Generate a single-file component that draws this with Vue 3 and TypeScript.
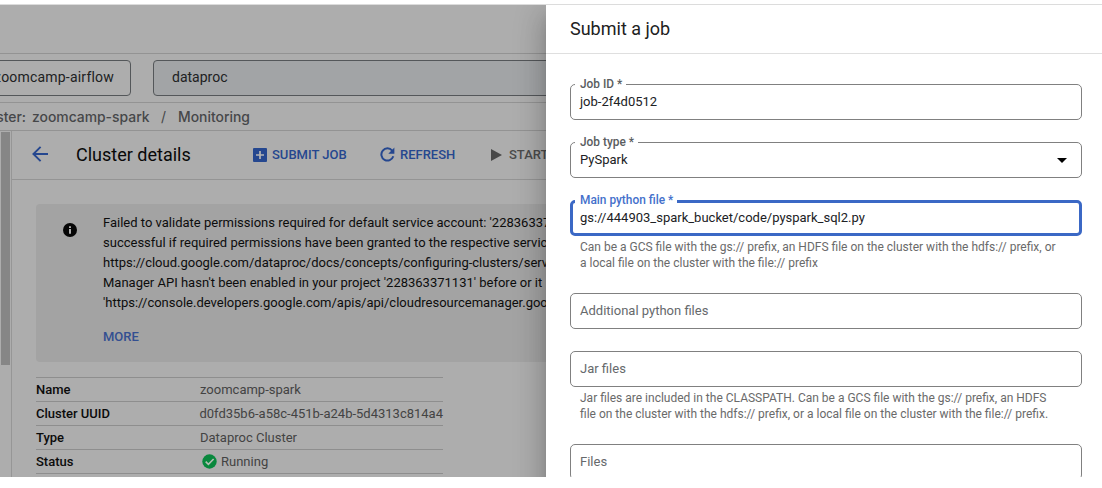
<script setup lang="ts">
interface Field {
  label: string
  value?: string
  hint?: string[]
  focused?: boolean
  select?: boolean
}

const fields: Field[] = [
  { label: 'Job ID *', value: 'job-2f4d0512' },
  { label: 'Job type *', value: 'PySpark', select: true },
  {
    label: 'Main python file *',
    value: 'gs://444903_spark_bucket/code/pyspark_sql2.py',
    focused: true,
    hint: [
      'Can be a GCS file with the gs:// prefix, an HDFS file on the cluster with the hdfs:// prefix, or',
      'a local file on the cluster with the file:// prefix',
    ],
  },
  { label: 'Additional python files' },
  {
    label: 'Jar files',
    hint: [
      'Jar files are included in the CLASSPATH. Can be a GCS file with the gs:// prefix, an HDFS',
      'file on the cluster with the hdfs:// prefix, or a local file on the cluster with the file:// prefix.',
    ],
  },
  { label: 'Files' },
]

const notice: string[] = [
  "Failed to validate permissions required for default service account: '228363371131",
  'successful if required permissions have been granted to the respective service',
  'https://cloud.google.com/dataproc/docs/concepts/configuring-clusters/service',
  "Manager API hasn't been enabled in your project '228363371131' before or it",
  "'https://console.developers.google.com/apis/api/cloudresourcemanager.google",
]

const details: { name: string; value: string; ok?: boolean }[] = [
  { name: 'Name', value: 'zoomcamp-spark' },
  { name: 'Cluster UUID', value: 'd0fd35b6-a58c-451b-a24b-5d4313c814a4' },
  { name: 'Type', value: 'Dataproc Cluster' },
  { name: 'Status', value: 'Running', ok: true },
]
</script>

<template>
  <div class="window">
    <div class="stage">
      <main class="page">
        <div class="banner"></div>
        <div class="searchbar">
          <div class="project"><span>zoomcamp-airflow</span></div>
          <div class="search">dataproc</div>
        </div>
        <nav class="crumbs">
          <span class="crumb-kind">ster:</span>
          <span class="crumb-name">zoomcamp-spark</span>
          <span class="slash">/</span>
          <span class="crumb-last">Monitoring</span>
        </nav>
        <div class="body">
          <div class="rail"><div class="thumb"></div></div>
          <section class="content">
            <header class="toolbar">
              <svg class="back" width="16" height="16" viewBox="0 0 16 16">
                <path d="M8.6 .8 1.4 8l7.2 7.2M1.6 8H16" fill="none" stroke="#25478f" stroke-width="1.9" />
              </svg>
              <h1>Cluster details</h1>
              <span class="action submit">
                <svg width="14" height="14" viewBox="0 0 14 14">
                  <rect width="14" height="14" rx="1" fill="#25478f" />
                  <path d="M7 3v8M3 7h8" stroke="#b4b4b4" stroke-width="1.7" />
                </svg>
                SUBMIT JOB
              </span>
              <span class="action refresh">
                <svg width="15" height="15" viewBox="0 0 15 15">
                  <path d="M12.2 3.6A6.1 6.1 0 1 0 13.3 9.3" fill="none" stroke="#25478f" stroke-width="2" />
                  <path d="M14.4.6v6.1H8.3z" fill="#25478f" />
                </svg>
                REFRESH
              </span>
              <span class="action start">
                <svg width="11" height="12" viewBox="0 0 11 12"><path d="M0 0 11 6 0 12z" fill="#484848" /></svg>
                START
              </span>
            </header>
            <div class="notice">
              <svg width="14" height="14" viewBox="0 0 14 14">
                <circle cx="7" cy="7" r="7" fill="#060606" />
                <path d="M6.1 3.3h1.8v1.6H6.1zM6.1 6.1h1.8v4.7H6.1z" fill="#c0c0c0" />
              </svg>
              <div class="notice-text">
                <p v-for="line in notice" :key="line">{{ line }}</p>
                <a>MORE</a>
              </div>
            </div>
            <dl class="details">
              <div v-for="row in details" :key="row.name" class="detail">
                <dt>{{ row.name }}</dt>
                <dd>
                  <svg v-if="row.ok" width="15" height="15" viewBox="0 0 15 15">
                    <circle cx="7.5" cy="7.5" r="7.2" fill="#09883d" />
                    <path d="M3.7 7.6 6.4 10.3 11.6 5" fill="none" stroke="#b5beb5" stroke-width="1.6" />
                  </svg>
                  <span>{{ row.value }}</span>
                </dd>
              </div>
            </dl>
          </section>
        </div>
      </main>
      <aside class="drawer">
        <header>Submit a job</header>
        <form>
          <div
            v-for="field in fields"
            :key="field.label"
            class="field"
            :class="{ focused: field.focused }"
          >
            <div class="box">
              <label v-if="field.value">{{ field.label }}</label>
              <span v-if="field.value" class="value">{{ field.value }}</span>
              <span v-else class="placeholder">{{ field.label }}</span>
              <svg v-if="field.select" width="10" height="5" viewBox="0 0 10 5"><path d="M0 0h10L5 5z" /></svg>
            </div>
            <div v-if="field.hint" class="hint">
              <div v-for="line in field.hint" :key="line">{{ line }}</div>
            </div>
          </div>
        </form>
      </aside>
    </div>
  </div>
</template>

<style>
body {
  margin: 0;
  background: #fff;
}
</style>

<style scoped>
.window {
  box-sizing: border-box;
  width: 1102px;
  height: 488px;
  padding-top: 4px;
  overflow: hidden;
  font-family: Roboto, 'Liberation Sans', sans-serif;
  font-size: 13px;
  white-space: nowrap;
}
.stage {
  position: relative;
  box-sizing: border-box;
  height: 473px;
  border-top: 1px solid #dcdcdc;
  overflow: hidden;
}
.page {
  display: flex;
  flex-direction: column;
  height: 472px;
  background: #adadad;
}
.banner {
  flex: none;
  height: 48px;
  border-bottom: 1px solid #939393;
}
.searchbar {
  flex: none;
  display: flex;
  gap: 22px;
  height: 42px;
  padding-top: 6px;
  border-bottom: 1px solid #939393;
}
.project,
.search {
  box-sizing: border-box;
  height: 36px;
  border: 1px solid #54575a;
  border-radius: 4px;
  font-size: 14px;
  line-height: 33px;
  color: #202122;
}
.project {
  display: flex;
  justify-content: flex-end;
  width: 141px;
  margin-left: -10px;
  padding-right: 16px;
  letter-spacing: 0.2px;
}
.search {
  flex: 1;
  padding-left: 18px;
  background: #a2a4a6;
}
.crumbs {
  flex: none;
  display: flex;
  height: 27px;
  margin-left: -23px;
  border-bottom: 1px solid #939393;
  font-family: Inter, Roboto, sans-serif;
  font-size: 13.9px;
  font-weight: 500;
  line-height: 28px;
  color: #464749;
}
.crumb-kind {
  display: flex;
  justify-content: flex-end;
  width: 49px;
}
.crumb-name {
  width: 129px;
  margin-left: 6px;
}
.slash {
  width: 17px;
  font-weight: 400;
}
.body {
  display: flex;
  flex: 1;
  min-height: 0;
}
.rail {
  flex: none;
  width: 11px;
  border-right: 1px solid #969696;
}
.thumb {
  width: 9px;
  height: 233px;
  margin: 1px 0 0 1px;
  background: #868686;
}
.content {
  flex: 1;
  min-width: 0;
}
.toolbar {
  display: flex;
  align-items: center;
  box-sizing: border-box;
  height: 49px;
  padding: 0 0 2px 20px;
  border-bottom: 1px solid #949494;
}
.back {
  flex: none;
}
h1 {
  flex: none;
  width: 177px;
  margin: 0 0 0 28px;
  font-size: 18px;
  font-weight: 400;
  color: #080808;
}
.action {
  flex: none;
  display: flex;
  align-items: center;
  padding-top: 1px;
  font-size: 13px;
  font-weight: 500;
  color: #25478f;
}
.submit {
  gap: 5px;
  width: 127px;
}
.refresh {
  gap: 5px;
  width: 111px;
}
.start {
  gap: 7px;
  color: #4b4b4b;
}
.notice {
  box-sizing: border-box;
  display: flex;
  gap: 26px;
  height: 158px;
  margin: 24px 0 0 24px;
  padding: 9px 0 0 27px;
  border-radius: 4px;
  background: #a3a3a3;
}
.notice svg {
  flex: none;
  margin-top: 10px;
}
.notice p {
  margin: 0;
  line-height: 20px;
  color: #0d0d0d;
}
.notice a {
  display: block;
  margin-top: 14px;
  line-height: 20px;
  font-weight: 500;
  color: #334f91;
}
.details {
  width: 407px;
  margin: 15px 0 0 24px;
  border-top: 1px solid #8e8e8e;
}
.detail {
  display: flex;
  height: 23px;
  line-height: 24px;
  border-bottom: 1px solid #8e8e8e;
}
dt {
  width: 164px;
  font-weight: 500;
  color: #0b0b0b;
}
dd {
  display: flex;
  align-items: center;
  margin: 0;
  color: #434343;
}
dd svg {
  margin: 0 4px 1px 2px;
}
.drawer {
  position: absolute;
  top: 0;
  right: 0;
  bottom: -80px;
  width: 556px;
  background: #fff;
  box-shadow:
    0 8px 10px -5px rgba(0, 0, 0, 0.2),
    0 16px 24px 2px rgba(0, 0, 0, 0.14),
    0 6px 30px 5px rgba(0, 0, 0, 0.12);
}
.drawer header {
  height: 48px;
  padding-left: 24px;
  border-bottom: 1px solid #dfdfdf;
  font-size: 18px;
  line-height: 48px;
  color: #212121;
}
form {
  padding: 30px 20px 0 24px;
}
.field {
  margin-bottom: 22px;
}
.box {
  position: relative;
  box-sizing: border-box;
  display: flex;
  align-items: center;
  justify-content: space-between;
  height: 36px;
  padding: 0 14px 0 9px;
  border: 1px solid #808080;
  border-radius: 5px;
}
.box label {
  position: absolute;
  top: -8px;
  left: 4px;
  padding: 0 4px 0 5px;
  background: #fff;
  font-size: 11.9px;
  font-weight: 500;
  line-height: 14px;
  color: #5a5d60;
}
.focused .box {
  padding-left: 7px;
  border: 3px solid #3b68c5;
}
.focused label {
  top: -10px;
  left: 2px;
  color: #4470cb;
}
.value {
  padding-bottom: 2px;
  color: #202124;
}
.placeholder {
  padding-bottom: 2px;
  color: #66696c;
}
.hint {
  padding: 3px 0 0 10px;
  font-size: 12px;
  line-height: 16px;
  color: #6a6a6a;
}
</style>
